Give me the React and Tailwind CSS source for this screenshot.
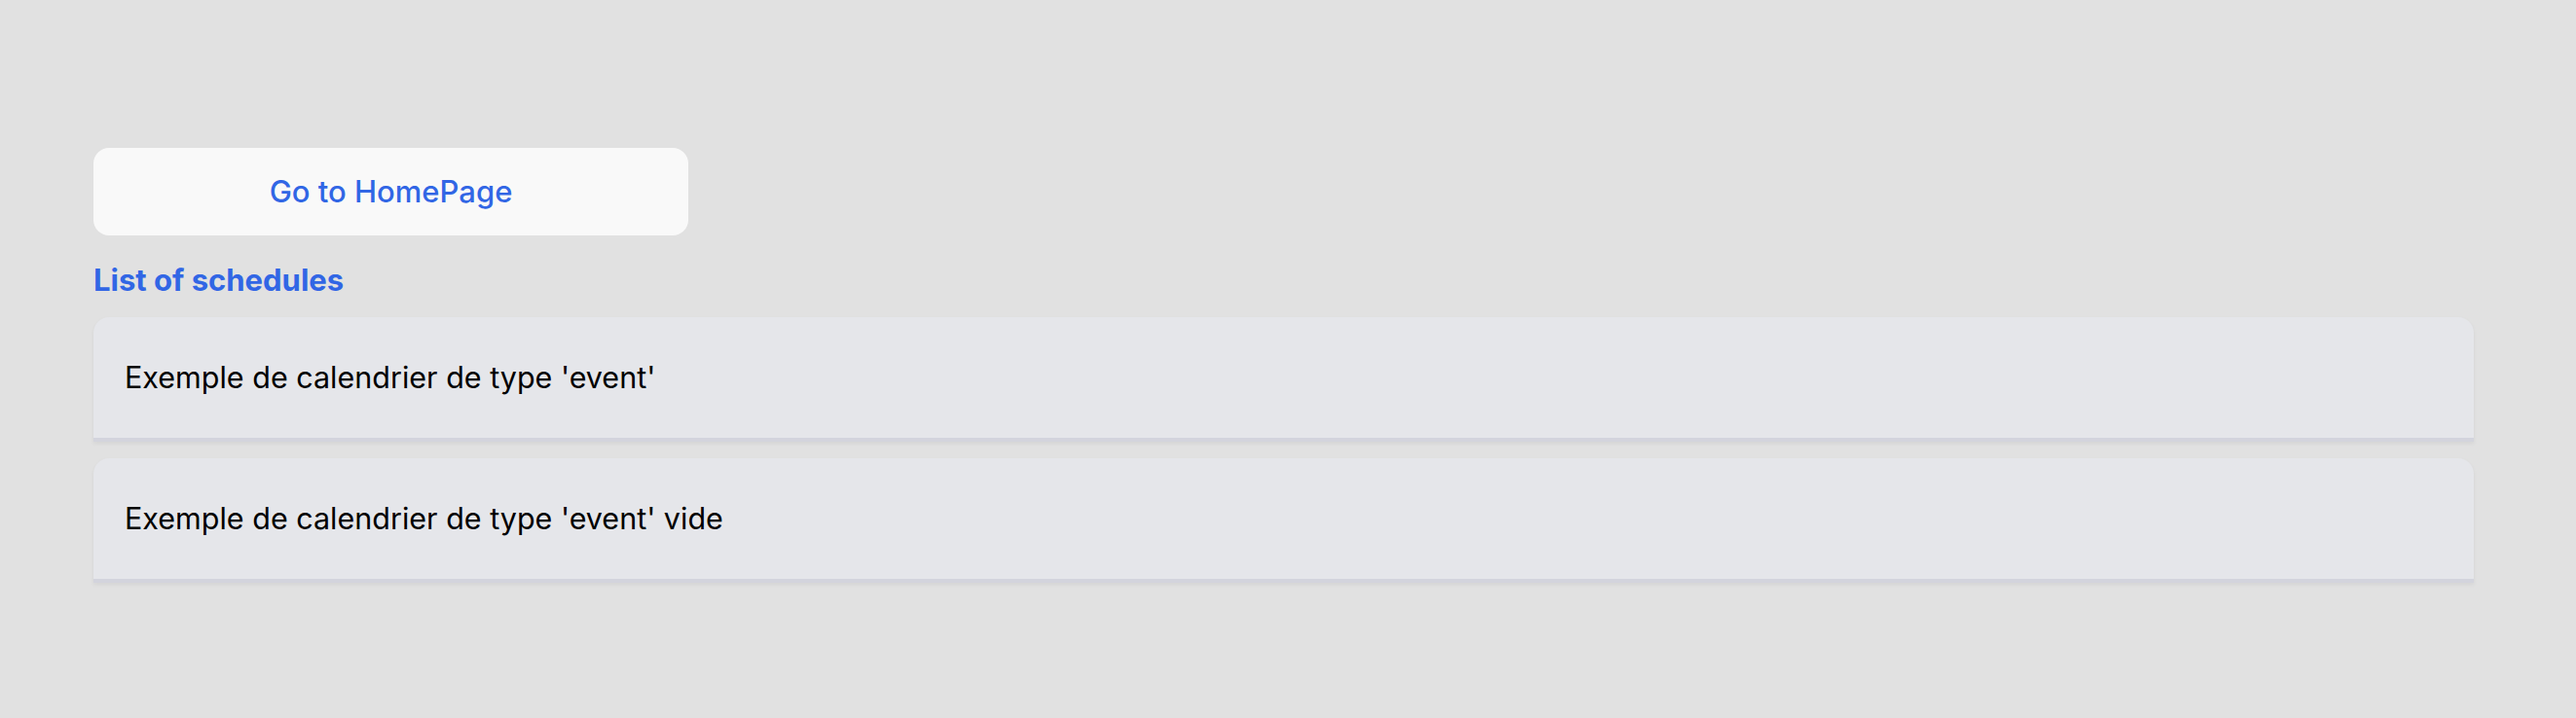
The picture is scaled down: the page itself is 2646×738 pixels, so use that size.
export default function App() {
  const items = [
    "Exemple de calendrier de type 'event'",
    "Exemple de calendrier de type 'event' vide",
  ];
  return (
    <div className="min-h-[738px] w-full bg-[#e1e1e1] pl-[96px] pr-[105px] pt-[152px] font-['Inter',sans-serif]">
      <button className="flex h-[90px] w-[611px] items-center justify-center rounded-[16px] bg-[#f9f9f9] text-[31px] font-medium text-[#3166e5]">
        Go to HomePage
      </button>
      <h2 className="mt-[24px] text-[31px] font-bold leading-[44px] text-[#3166e5]">
        List of schedules
      </h2>
      <div className="mt-[16px] flex flex-col gap-[17px]">
        {items.map((t) => (
          <div
            key={t}
            className="flex h-[128px] items-center rounded-t-[16px] border-b-[4px] border-[#d3d4dd] bg-[#e5e6ea] pl-[32px] text-[30.5px] text-black shadow-[0_2px_4px_rgba(0,0,0,0.06)]"
          >
            {t}
          </div>
        ))}
      </div>
    </div>
  );
}
